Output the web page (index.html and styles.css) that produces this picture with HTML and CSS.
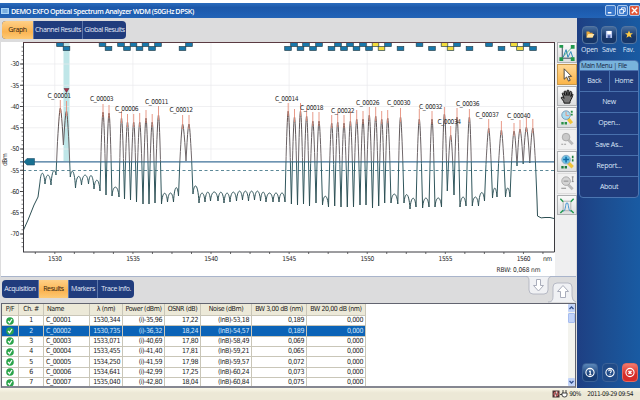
FILE: index.html
```html
<!DOCTYPE html>
<html lang="en">
<head>
    <meta charset="UTF-8">
    <title>DEMO EXFO Optical Spectrum Analyzer</title>
    <link rel="stylesheet" href="styles.css">
</head>
<body>
    <div class="titlebar">
        <svg class="app-icon" viewBox="0 0 8 6"><rect width="8" height="6" fill="#a9d4f5"/><path d="M1 2h6M1 4h6M3 1v4M5 1v4" stroke="#4f8cc9" stroke-width=".6"/></svg>
        <span class="title">DEMO EXFO Optical Spectrum Analyzer WDM (50GHz DPSK)</span>
        <div class="window-buttons">
            <span class="win"><svg viewBox="0 0 10 10"><path d="M2 7.5h4" stroke="#fff" stroke-width="1.6"/></svg></span>
            <span class="win"><svg viewBox="0 0 10 10" fill="none" stroke="#fff"><path d="M4 4V2h4v4H6.5"/><rect x="2" y="4" width="4" height="4"/></svg></span>
            <span class="win close"><svg viewBox="0 0 10 10"><path d="M2 2l6 6M8 2L2 8" stroke="#fff" stroke-width="1.5"/></svg></span>
        </div>
    </div>
    <div class="window">
        <main>
            <div class="tabbar top">
                <div class="tabs">
                    <span class="tab active w31">Graph</span>
                    <span class="tab w49">Channel Results</span>
                    <span class="tab w44">Global Results</span>
                </div>
            </div>
            <div class="graph">
                <svg id="chart" viewBox="0 42 555 233" width="555" height="233"></svg>
                <div class="tools">
                    <span class="tool"><svg viewBox="0 0 18 20"><path d="M4 3v13h12" fill="none" stroke="#345"/><path d="M5 15l3-8 2 8 3-6 2 6" fill="none" stroke="#2787b8"/><path d="M1 2h4v3H1zM13 2h4v4h-4zM1 15h4v4H1zM13 15h4v4h-4z" fill="#20994d"/><path d="M14 5L6 13" stroke="#20994d" stroke-width=".7"/></svg></span>
                    <span class="tool on"><svg viewBox="0 0 18 20"><path d="M6 4v11l2.6-2.4 2 4.4 1.8-.9-2-4.1h3.4z" fill="#fff" stroke="#333" stroke-width=".9"/></svg></span>
                    <span class="tool"><svg viewBox="0 0 18 20"><path d="M6 17c0-3-4-5-3-6s2 0 3 1L4 7c0-1 1-1 2 0l1 2-1-4c0-1 2-1 2 0l1 4V4c0-1 2-1 2 0v5l1-4c1-1 2 0 2 1l-1 4 1-2c1-1 2 0 1 1-1 4-3 5-3 8z" fill="#777" stroke="#111"/></svg></span>
                    <span class="tool"><svg viewBox="0 0 18 20"><path d="M10 11l4 5" stroke="#f0c43a" stroke-width="3.5"/><circle cx="8" cy="7.500" r="4.500" fill="#a9dcf0" stroke="#7699b6"/><path d="M8 4v4h3" fill="none" stroke="#e8937f"/><path d="M14 3v5" stroke="#289047" stroke-width="2" stroke-dasharray="2 1"/><path d="M3 16h6" stroke="#289047" stroke-width="2.500" stroke-dasharray="2.500 1"/></svg></span>
                    <span class="tool off"><svg viewBox="0 0 18 20"><path d="M10 10l5 5" stroke="#bbb" stroke-width="3"/><circle cx="8" cy="7.500" r="4" fill="#c9c9c9" stroke="#aaa"/><path d="M3 15h5" stroke="#999" stroke-dasharray="2 1"/></svg></span>
                    <span class="tool"><svg viewBox="0 0 18 20"><path d="M10 11l5 5" stroke="#f0c43a" stroke-width="3.500"/><circle cx="8" cy="8" r="4.500" fill="#6ec3e5" stroke="#86a8c4"/><path d="M5 8h6M8 5v6" stroke="#106ba6" stroke-width="1.600"/><path d="M15 4v6" stroke="#1c7c3c" stroke-width="1.700" stroke-dasharray="2.500 1"/><path d="M3 16h6" stroke="#1c7c3c" stroke-width="2.500" stroke-dasharray="2.500 1"/></svg></span>
                    <span class="tool off"><svg viewBox="0 0 18 20"><path d="M10 11l5 5" stroke="#bbb" stroke-width="3"/><circle cx="8" cy="7.500" r="4.500" fill="#d4d4d4" stroke="#aaa"/><path d="M5.500 7.500h5M15 3v5M14 3h2M14 8h2M3 15h5" stroke="#888"/></svg></span>
                    <span class="tool"><svg viewBox="0 0 18 20"><path d="M5 5.500h8v10H5z" fill="none" stroke="#888" stroke-width=".6"/><path d="M5 16c3 0 2-9 4-9s1 9 4 9" fill="none" stroke="#3c8fd0"/><path d="M2 3l3 3M16 3l-3 3M2 18l3-3M16 18l-3-3" stroke="#20994d" stroke-width="1.500"/></svg></span>
                </div>
            </div>
            <div class="tabbar bottom">
                <div class="tabs">
                    <span class="tab w36">Acquisition</span>
                    <span class="tab active w30">Results</span>
                    <span class="tab w29">Markers</span>
                    <span class="tab w37">Trace Info.</span>
                </div>
                <svg class="pane-arrows" viewBox="0 0 50 27" width="50" height="27" fill="#f0f1f4" stroke="#a9adbb">
                    <path d="M0 .500C3 .500 3 3 3 6v8q0 4 4 4h11q4 0 4-4V6q0-5 3-5.500" stroke-width=".8"/>
                    <path d="M22 26c4 0 5-2 5-6v-9q0-4 4-4h11q4 0 4 4v9q0 5 4 6" stroke-width=".8"/>
                    <path d="M10.500 3.500h4v6h3L12.500 15l-5-5.500h3z" fill="#fff"/>
                    <path d="M34.500 21.500h5v-6h3L37 9.500l-5.500 6h3z" fill="#fff"/>
                </svg>
            </div>
            <div class="results">
                <table>
                    <thead>
                        <tr><th class="c-pf">P/F</th><th class="c-ch">Ch. #</th><th class="c-name">Name</th><th class="c-wl">λ (nm)</th><th class="c-pow">Power (dBm)</th><th class="c-osnr">OSNR (dB)</th><th class="c-noise">Noise (dBm)</th><th class="c-bw3">BW 3,00 dB (nm)</th><th class="c-bw20">BW 20,00 dB (nm)</th></tr>
                    </thead>
                    <tbody id="rows"></tbody>
                </table>
                <div class="scrollbar">
                    <span class="arrow"><svg viewBox="0 0 7 8"><path d="M1.500 5l2-2 2 2" fill="none" stroke="#34518e" stroke-width="1.300"/></svg></span>
                    <span class="thumb"></span>
                    <span class="arrow down"><svg viewBox="0 0 7 8"><path d="M1.500 3l2 2 2-2" fill="none" stroke="#34518e" stroke-width="1.300"/></svg></span>
                </div>
            </div>
        </main>
        <aside>
            <div class="shortcuts">
                <div class="shortcut"><span><svg viewBox="0 0 16 17"><path d="M4 5h3l1 1.500h3V12H4z" fill="#e9a93c"/><path d="M6 8h7l-2 4H4z" fill="#ffe3a1"/></svg></span>Open</div>
                <div class="shortcut"><span><svg viewBox="0 0 16 17"><path d="M4.500 4.500h7v8h-7z" fill="#b9c7f0"/><path d="M6 4.500h4.500v3.500H6z" fill="#fff"/><path d="M6.500 9.500h3v3h-3z" fill="#4660a5"/></svg></span>Save</div>
                <div class="shortcut"><span><svg viewBox="0 0 16 17"><path d="M8 4l1.300 3 3.200.2-2.500 2 .9 3.200L8 10.600l-2.900 1.800.9-3.200-2.500-2 3.200-.2z" fill="#ffcb45"/></svg></span>Fav.</div>
            </div>
            <div class="menu">
                <div class="menu-head">Main Menu | File</div>
                <div class="menu-row"><span>Back</span><span>Home</span></div>
                <div class="menu-row"><span>New</span></div>
                <div class="menu-row"><span>Open...</span></div>
                <div class="menu-row"><span>Save As...</span></div>
                <div class="menu-row"><span>Report...</span></div>
                <div class="menu-row"><span>About</span></div>
            </div>
            <div class="system">
                <span class="info"><svg viewBox="0 0 16 18"><circle cx="8" cy="9" r="4.700"/><path d="M7 8h1.300v3.500M6.700 11.500h3M8 5.500v1.200"/></svg></span>
                <span><svg viewBox="0 0 16 18"><circle cx="8" cy="9" r="4.700"/><path d="M6.500 7.500q0-1.500 1.500-1.500t1.500 1.300T8 9.700M8 11v1.200"/></svg></span>
                <span class="exit"><svg viewBox="0 0 16 18"><circle cx="8" cy="9" r="4.700"/><path d="M6.300 7.300l3.400 3.400M9.700 7.300l-3.400 3.400" stroke-width="1.600"/></svg></span>
            </div>
        </aside>
    </div>
    <footer>
        <svg viewBox="0 0 16 8" width="16" height="8"><rect x=".5" y=".5" width="7" height="7" fill="#4b3032"/><circle cx="4" cy="4" r="2" fill="none" stroke="#ed7474"/><path d="M5 1L3 7" stroke="#fff" stroke-width=".7"/><path d="M10 3h5v2q0 2-2.500 2T10 5zM11 0v3M14 0v3M8 4.500h2" fill="#fff" stroke="#333" stroke-width=".9"/></svg>
        <span class="battery">90%</span>
        <span class="date">2011-09-29 09:54</span>
    </footer>
    <script src="script.js"></script>
</body>
</html>
```
FILE: styles.css
```css
* {
    box-sizing: border-box;
}

body {
    display: flex;
    flex-direction: column;
    width: 640px;
    height: 400px;
    margin: 0;
    padding-top: 3px;
    overflow: hidden;
    background: #fff;
    color: #222;
    font-family: "DejaVu Sans Condensed", "DejaVu Sans", sans-serif;
    font-size: 7px;
    letter-spacing: -0.4px;
}

svg {
    display: block;
}

.titlebar {
    display: flex;
    flex: none;
    align-items: center;
    height: 15px;
    padding: 0 0 0 1px;
    background: linear-gradient(#2b6cbd, #1d58a9 30%, #1f60b4 80%, #2463b4);
}

.app-icon {
    width: 8px;
    height: 6px;
    margin-right: 2px;
}

.title {
    color: #fff;
    font-family: "Open Sans", sans-serif;
    font-weight: 600;
    font-size: 7.2px;
    letter-spacing: -0.42px;
    white-space: nowrap;
}

.window-buttons {
    display: flex;
    gap: 1px;
    margin-left: auto;
}

.win {
    width: 11px;
    height: 11px;
    border: 1px solid #a9c9ee;
    border-radius: 2px;
    background: #3a78cb;
}

.win.close {
    background: #e2583b;
}

.window {
    display: flex;
    flex: 1;
    min-height: 0;
}

main {
    display: flex;
    flex-direction: column;
    width: 577px;
    padding: 0 1px;
    background: #dcdcdd;
}

.tabbar {
    display: flex;
    flex: none;
}

.tabbar.top {
    height: 24px;
    padding: 3px 1px 0;
}

.tabbar.bottom {
    justify-content: space-between;
    height: 27px;
    padding: 0 0 0 1px;
    border-top: 1px solid #a9b4cb;
}

.bottom .tabs {
    margin-top: 3px;
}

.pane-arrows {
    margin-top: -1px;
}

.tabs {
    display: flex;
    height: 18px;
    border-radius: 4px;
    overflow: hidden;
    background: #203c7d;
}

.tab {
    border-left: 1px solid #5b76aa;
    color: #e3e9f7;
    line-height: 18px;
    text-align: center;
    white-space: nowrap;
    letter-spacing: -0.42px;
    font-family: "Open Sans", sans-serif;
    font-size: 7px;
}

.tab:first-child {
    border-left: none;
}

.tab.active {
    background: linear-gradient(#ffd087, #fbb452 60%, #fdca76);
    color: #30220f;
}

.w29 { width: 29px; }
.w30 { width: 30px; }
.w31 { width: 31px; }
.w36 { width: 36px; }
.w37 { width: 37px; }
.w44 { width: 44px; }
.w49 { width: 49px; }

.graph {
    display: flex;
    flex: none;
    height: 234px;
    background: linear-gradient(90deg, #fff 554px, #efeff0 554px);
}

#chart {
    flex: none;
    margin-left: -1px;
}

#chart text {
    font-size: 6.6px;
    fill: #2a2a2a;
}

.tools {
    display: flex;
    flex-direction: column;
    gap: 1px;
    margin-left: 2px;
}

.tool {
    width: 20px;
    height: 20.8px;
    border: 1px solid #aeb0b2;
    background: linear-gradient(#fafafa, #dcdedf);
}

.tool svg {
    width: 18px;
    height: 19px;
}

.tool.on {
    border-color: #c99a4c;
    background: linear-gradient(#ffd894, #fbb549);
}

.tool.off {
    border-color: #ddd;
    background: #f1f1f1;
}

.results {
    display: flex;
    flex: none;
    justify-content: space-between;
    height: 85px;
    border: 1px solid #626470;
    border-bottom: 2px solid #858791;
    background: #fff;
    overflow: hidden;
}

table {
    width: 364px;
    height: 10px;
    border-collapse: separate;
    border-spacing: 0;
    table-layout: fixed;
}

th,
td {
    height: 10.35px;
    padding: 0 2px;
    border-right: 1px solid #c9c6b8;
    border-bottom: 1px solid #c9c6b8;
    line-height: 9px;
    text-align: right;
    white-space: nowrap;
}

th {
    height: 12px;
    padding: 0 1px;
    background: #ece9d8;
    font-weight: normal;
    line-height: 11px;
    text-align: center;
}

th.c-name {
    padding-left: 3px;
    text-align: left;
}

td:nth-child(1),
td:nth-child(2) {
    text-align: center;
}

td:nth-child(3) {
    text-align: left;
}

td svg {
    width: 8px;
    height: 8px;
    margin: 0 auto;
}

.selected td {
    background: #0b63b7;
    color: #d4e6fa;
}

.c-pf { width: 17px; }
.c-ch { width: 25px; }
.c-name { width: 46px; }
.c-wl { width: 33px; }
.c-pow { width: 42px; }
.c-osnr { width: 36px; }
.c-noise { width: 51px; }
.c-bw3 { width: 55px; }
.c-bw20 { width: 59px; }

.scrollbar {
    display: flex;
    flex-direction: column;
    width: 7px;
    height: 82px;
    background: #f3f3ee;
}

.arrow,
.thumb {
    height: 8px;
    border-radius: 1px;
    background: #c2d3f8;
}

.thumb {
    height: 10px;
    margin-top: 1px;
    border: 1px solid #a6bdf0;
}

.arrow.down {
    margin-top: auto;
}

aside {
    display: flex;
    flex: 1;
    flex-direction: column;
    padding: 8px 1px 6px 2px;
    background: linear-gradient(90deg, #1e3f83, #1c4c8f 40%, #195ba3);
    color: #dce6f8;
    font-family: "Open Sans", sans-serif;
    letter-spacing: -0.3px;
}

.shortcuts {
    display: flex;
    justify-content: space-between;
    height: 34px;
    padding: 0 1px;
}

.shortcut {
    width: 19px;
    text-align: center;
    line-height: 12px;
}

.shortcut span {
    display: block;
    width: 16px;
    height: 18px;
    margin: 0 auto;
    border: 1px solid #55759f;
    border-radius: 4px;
    background: linear-gradient(#456d9f, #173668 60%);
}

.menu {
    border: 1px solid #4c76b2;
    border-radius: 4px;
    overflow: hidden;
    background: #203c7c;
}

.menu-head {
    height: 9px;
    padding-left: 1px;
    background: #78b3dc;
    color: #15243f;
    font-size: 6.5px;
    line-height: 9px;
    letter-spacing: -0.35px;
    white-space: nowrap;
}

.menu-row {
    display: flex;
    height: 21.2px;
    border-top: 1px solid #4870ad;
    line-height: 20px;
    text-align: center;
}

.menu-row span {
    flex: 1;
}

.menu-row span + span {
    border-left: 1px solid #4870ad;
}

.system {
    display: flex;
    justify-content: space-between;
    margin-top: auto;
    padding: 0 1px 0 3px;
}

.system span {
    width: 16px;
    height: 19px;
    border: 1px solid #3b6196;
    border-radius: 4px;
    background: #204b88;
}

.system .info {
    background: linear-gradient(#5b88ba, #173d76 65%);
}

.system .exit {
    border-color: #e2695f;
    background: linear-gradient(#f47a6d, #d62c29 60%);
}

.system svg {
    width: 14px;
    height: 17px;
    fill: none;
    stroke: #fff;
    stroke-width: 1.2;
}

footer {
    display: flex;
    flex: none;
    align-items: center;
    justify-content: flex-end;
    height: 12px;
    padding-right: 7px;
    background: linear-gradient(#faf8e9, #ece8d6 40%);
    font-size: 6.5px;
}

.battery {
    width: 19px;
    padding-left: 1px;
}

.date {
    letter-spacing: -0.43px;
}
```
FILE: script.js
```js
const chart = document.getElementById("chart");

// x centre, tip of the marker line, top of the trace
const peaks = [
    [60.3, 100, 108], [66.5, 101, 111], [103, 104, 112], [109, 105, 113],
    [121.5, 111, 118], [127.5, 114, 122], [133.7, 114, 122], [139.7, 113, 122],
    [146, 110, 118], [152.2, 114, 122], [158.5, 106, 115], [182.6, 115, 124],
    [189, 115, 124], [288.2, 103, 111], [294.5, 109, 117], [300.5, 103, 111],
    [306.6, 108, 116], [312.8, 112, 121], [319, 112, 121], [331.7, 115, 123],
    [337.7, 112, 122], [344, 115, 123], [350.4, 111, 121], [356.7, 110, 119],
    [363, 111, 119], [369.3, 107, 115], [375.7, 107, 116], [381.7, 111, 119],
    [387.7, 110, 118], [400.5, 108, 117], [419.3, 109, 119], [432, 111, 119],
    [444.4, 107, 114], [450.7, 126, 135], [457, 108, 117], [469.4, 109, 117],
    [488.7, 119, 128], [501.4, 121, 130], [514, 123, 131], [520, 120, 129],
    [526.4, 118, 127], [532.8, 119, 128]
];

// valleys of the noise floor; the trace rises to a hump or a peak between two of them
const valleys = [
    [40, 182], [45, 184], [51, 185], [56, 175], [63.4, 145], [70.3, 177], [75.5, 188], [81.5, 185],
    [88.5, 184], [94, 189], [100, 191], [106, 195], [112, 196], [119, 197], [124.5, 199],
    [130.5, 200], [136.5, 202], [143, 204], [149, 204], [155, 203], [161.5, 204], [167.5, 202],
    [173.5, 202], [178.5, 196], [186, 161], [193, 194], [199, 203], [205, 202], [210.5, 201],
    [218, 201], [224, 203], [230, 202], [236.5, 201], [242.5, 200], [248.5, 201], [254.5, 200],
    [260.5, 201], [266, 202], [273, 202], [279, 202], [285, 202], [291.4, 204], [297.5, 205],
    [303.5, 204], [309.5, 206], [316, 203], [322.5, 205], [328.5, 207], [334.7, 206], [341, 207],
    [347.3, 207], [353.5, 207], [360, 205], [366, 205], [372.5, 208], [378.7, 206], [384.7, 203],
    [391, 203], [397.8, 204], [404, 203], [410, 209], [416, 207], [422.6, 208], [429, 207],
    [435, 207], [441.5, 207], [447.3, 191], [454, 195], [460, 207], [466, 206], [472.3, 206],
    [478.5, 206], [484.5, 201], [492.5, 198], [497, 197], [505.5, 197], [510, 197],
    [517, 166], [523.2, 164], [529.8, 163], [537, 200]
];

const blocks = {
    up: [60, 102.5, 121, 133.5, 145.5, 158, 294, 306, 319, 338, 350, 363, 375.5, 388, 419.5, 444.5, 457, 489, 514, 526.5, 189],
    down: [66.5, 108.5, 127, 139.5, 152, 182.5, 288, 300.5, 313, 331.5, 344, 356.5, 369, 381.5, 400.5, 432, 450.5, 469.5, 501.5, 520, 533]
};
const yellow = [375.5, 381.5, 444.5, 450.5, 514, 520];

const labels = [
    ["C_00001", 47.5, 97.500], ["C_00003", 90, 101], ["C_00006", 115, 111], ["C_00011", 145, 103.500],
    ["C_00012", 169.500, 112], ["C_00014", 275, 101], ["C_00018", 300, 109.500], ["C_00022", 331, 113],
    ["C_00026", 356, 104.500], ["C_00030", 387, 105], ["C_00032", 419, 109], ["C_00034", 437.500, 124],
    ["C_00036", 456, 106], ["C_00037", 475.500, 117], ["C_00040", 507, 118]
];

function tracePath() {
    let d = "M23.500 230L28 220 34 205 38 197";
    d += "L" + valleys[0];
    for (let i = 1; i < valleys.length; i++) {
        const [ax, ay] = valleys[i - 1];
        const [bx, by] = valleys[i];
        const peak = peaks.find(p => p[0] > ax && p[0] < bx);
        if (peak) {
            d += rise(ax, ay, peak) + fall(peak, bx, by);
        } else {
            const top = Math.max(Math.min(ay, by) - 12, 168);
            d += `C${ax + 1} ${top} ${bx - 1} ${top} ${bx} ${by}`;
        }
    }
    return d + "L537.500 216Q541 219 545 217.500L550 217.500 554 218.500";
}

// flanks stay steep near the floor and round off towards the top
function rise(x, y, [px, , py]) {
    return `L${x + (px - x) * 0.35} ${y - (y - py) * 0.5}Q${px - 0.8} ${py} ${px} ${py}`;
}

function fall([px, , py], x, y) {
    return `Q${px + 0.8} ${py} ${x - (x - px) * 0.35} ${y - (y - py) * 0.5}L${x} ${y}`;
}

function drawChart() {
    let svg = `<defs><linearGradient id="trace" gradientUnits="userSpaceOnUse" x1="0" y1="108" x2="0" y2="200">
        <stop offset="0" stop-color="#6f4a43"/><stop offset=".2" stop-color="#5d5557"/>
        <stop offset=".57" stop-color="#756d70"/><stop offset=".59" stop-color="#35616a"/>
        <stop offset="1" stop-color="#2c4e52"/></linearGradient></defs>`;

    svg += `<rect x="63.500" y="43" width="6" height="118" fill="#bfe6e8"/>`;

    for (let i = 0; i < 9; i++) {
        const y = 64 + i * 21.25;
        if (i < 5) {
            svg += `<path d="M24 ${y}H554" stroke="#e9e9ec" stroke-width=".7"/>`;
        }
        svg += `<path d="M20 ${y}h4" stroke="#444"/><text x="19" y="${y + 2.300}" text-anchor="end">${-30 - i * 5}</text>`;
    }
    for (let y = 47; y < 250; y += 4.25) {
        svg += `<path d="M21.500 ${y}h2" stroke="#555" stroke-width=".7"/>`;
    }
    for (let i = 0; i < 7; i++) {
        const x = 54.8 + i * 78.1;
        svg += `<path d="M${x} 43V160" stroke="#e9e9ec" stroke-width=".7"/>`;
        svg += `<text x="${x}" y="261.300" text-anchor="middle">${1530 + i * 5}</text>`;
    }
    for (let x = 35.300; x < 550; x += 19.525) {
        svg += `<path d="M${x} 252v2" stroke="#444" stroke-width=".8"/>`;
    }

    svg += `<path d="M20 161.800H554" stroke="#3e7198" stroke-width="1.300"/>`;
    svg += `<path d="M23 170.500H554" stroke="#4b7c8c" stroke-width=".9" stroke-dasharray="3 2.500"/>`;
    svg += `<path d="${tracePath()}" fill="none" stroke="url(#trace)" stroke-linejoin="round"/>`;
    for (const [x, tip, top] of peaks) {
        svg += `<path d="M${x} ${tip}V${top + 5}" stroke="#e58f7c" stroke-width=".9"/>`;
    }

    svg += `<path d="M23.500 42V252M23 252H554.500V42" fill="none" stroke="#3b3b40"/>`;
    for (const row of ["up", "down"]) {
        for (const x of blocks[row]) {
            const fill = yellow.includes(x) ? "#f2dc3c" : "#1878ab";
            svg += `<rect x="${x - 3.300}" y="${row === "up" ? 42.500 : 46.500}" width="6.600" height="4" fill="${fill}" stroke="#28434f" stroke-width=".7"/>`;
        }
    }
    svg += `<path d="M23 42.500H554.500" stroke="#5b3b42"/>`;
    svg += `<path d="M64 88.500h5l-2.500 4z" fill="#a8304a" stroke="#54202c" stroke-width=".5"/>`;
    svg += `<path d="M24 161.800l3-3.300h7.500v6.500H27z" fill="#187091" stroke="#24536b" stroke-width=".6"/>`;

    for (const [name, x, y] of labels) {
        svg += `<text x="${x}" y="${y}">${name}</text>`;
    }
    svg += `<text x="543" y="261.300">nm</text><text x="496.500" y="271.500" letter-spacing="-.15">RBW: 0,068 nm</text>`;
    svg += `<text transform="translate(7 166) rotate(-90)">dBm</text>`;
    chart.innerHTML = svg;
}

const results = [
    ["1530,344", "(i)-35,96", "17,22", "(InB)-53,18", "0,189"],
    ["1530,735", "(i)-36,32", "18,24", "(InB)-54,57", "0,189"],
    ["1533,071", "(i)-40,69", "17,80", "(InB)-58,49", "0,069"],
    ["1533,455", "(i)-41,40", "17,81", "(InB)-59,21", "0,065"],
    ["1534,250", "(i)-41,59", "17,98", "(InB)-59,57", "0,072"],
    ["1534,641", "(i)-42,99", "17,25", "(InB)-60,24", "0,073"],
    ["1535,040", "(i)-42,80", "18,04", "(InB)-60,84", "0,075"]
];

const pass = `<svg viewBox="0 0 8 8"><circle cx="4" cy="4" r="3.800" fill="#2ba44b"/><path d="M2 4l1.600 1.700L6 2" fill="none" stroke="#fff" stroke-width="1.200"/></svg>`;

function drawRows() {
    document.getElementById("rows").innerHTML = results.map((cells, i) => {
        const values = [pass, i + 1, "C_0000" + (i + 1), ...cells, "0,000"];
        return `<tr class="${i === 1 ? "selected" : ""}">` + values.map(v => `<td>${v}</td>`).join("") + "</tr>";
    }).join("");
}

drawChart();
drawRows();
```
